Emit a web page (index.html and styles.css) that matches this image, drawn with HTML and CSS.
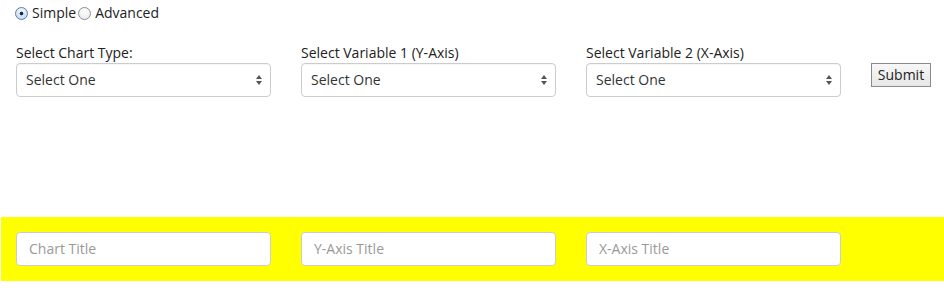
FILE: index.html
```html
<!DOCTYPE html>
<html>
<head>
<meta charset="utf-8">
<link rel="stylesheet" href="styles.css">
</head>
<body>
<div class="mode">
  <label class="opt"><input type="radio" name="mode" class="radio" checked>Simple</label>
  <label class="opt"><input type="radio" name="mode" class="radio">Advanced</label>
</div>
<div class="row top-row">
  <div class="col">
    <label class="lbl">Select Chart Type:</label>
    <div class="sel-wrap">
      <select class="sel"><option>Select One</option></select>
      <svg class="arrows" width="8" height="12" viewBox="0 0 8 12"><path d="M4 1 L7 5 L1 5 Z M4 11 L7 7 L1 7 Z" fill="#555"/></svg>
    </div>
  </div>
  <div class="col">
    <label class="lbl">Select Variable 1 (Y-Axis)</label>
    <div class="sel-wrap">
      <select class="sel"><option>Select One</option></select>
      <svg class="arrows" width="8" height="12" viewBox="0 0 8 12"><path d="M4 1 L7 5 L1 5 Z M4 11 L7 7 L1 7 Z" fill="#555"/></svg>
    </div>
  </div>
  <div class="col">
    <label class="lbl">Select Variable 2 (X-Axis)</label>
    <div class="sel-wrap">
      <select class="sel"><option>Select One</option></select>
      <svg class="arrows" width="8" height="12" viewBox="0 0 8 12"><path d="M4 1 L7 5 L1 5 Z M4 11 L7 7 L1 7 Z" fill="#555"/></svg>
    </div>
  </div>
  <div class="col-btn">
    <button class="btn">Submit</button>
  </div>
</div>
<div class="band">
  <div class="row">
    <div class="col"><input class="inp" type="text" placeholder="Chart Title"></div>
    <div class="col"><input class="inp" type="text" placeholder="Y-Axis Title"></div>
    <div class="col"><input class="inp" type="text" placeholder="X-Axis Title"></div>
  </div>
</div>
</body>
</html>
```

FILE: styles.css
```css
html, body {
  margin: 0;
  padding: 0;
  background: #fff;
  overflow: hidden;
}
body {
  font-family: "Open Sans", "DejaVu Sans", sans-serif;
  font-size: 14px;
  color: #333;
  width: 944px;
}
.mode {
  display: flex;
  align-items: center;
  height: 26px;
  padding-left: 15px;
  gap: 2px;
}
.opt {
  display: flex;
  align-items: center;
  gap: 4px;
  font-size: 14px;
  color: #222;
  line-height: 20px;
}
.radio {
  appearance: none;
  -webkit-appearance: none;
  margin: 0;
  width: 13px;
  height: 13px;
  border-radius: 50%;
  border: 1px solid #8f8f8f;
  background: radial-gradient(circle at 50% 30%, #ffffff 0%, #e6e6e6 100%);
  box-sizing: border-box;
}
.radio:checked {
  border-color: #5a7fa8;
  background: radial-gradient(circle, #1f2d3d 0, #1f2d3d 1.6px, transparent 2.2px),
              radial-gradient(circle at 50% 30%, #f4f9ff 0%, #b9d3ee 100%);
}
.row {
  display: flex;
  margin-left: 1px;
}
.col {
  flex: 0 0 285px;
  width: 285px;
  box-sizing: border-box;
  padding: 0 15px;
}
.top-row {
  margin-top: 17px;
}
.lbl {
  display: block;
  line-height: 20px;
  margin-bottom: 0;
  color: #222;
}
.sel-wrap {
  position: relative;
  width: 255px;
}
.sel {
  appearance: none;
  -webkit-appearance: none;
  display: block;
  width: 100%;
  height: 34px;
  padding: 5px 12px 7px 9px;
  border: 1px solid #ccc;
  border-radius: 4px;
  background: #fff;
  font-family: inherit;
  font-size: 14px;
  color: #333;
  box-sizing: border-box;
  box-shadow: inset 0 1px 1px rgba(0,0,0,0.04);
}
.arrows {
  position: absolute;
  right: 8px;
  top: 11px;
  pointer-events: none;
}
.col-btn {
  padding: 20px 0 0 15px;
}
.btn {
  display: block;
  width: 60px;
  height: 24px;
  padding: 0 0 1px;
  border: 1px solid #8a8a8a;
  border-radius: 0;
  background: linear-gradient(#f7f7f7, #e7e7e7);
  font-family: inherit;
  font-size: 14px;
  color: #222;
}
.band {
  margin-top: 120px;
  margin-left: 1px;
  height: 64px;
  background: #ffff00;
  padding-top: 15px;
  box-sizing: border-box;
}
.band .row {
  margin-left: 0;
}
.inp {
  display: block;
  width: 255px;
  height: 34px;
  padding: 5px 12px 7px;
  border: 1px solid #ccc;
  border-radius: 4px;
  background: #fff;
  font-family: inherit;
  font-size: 14px;
  color: #555;
  box-sizing: border-box;
}
.inp::placeholder {
  color: #999;
}
```
